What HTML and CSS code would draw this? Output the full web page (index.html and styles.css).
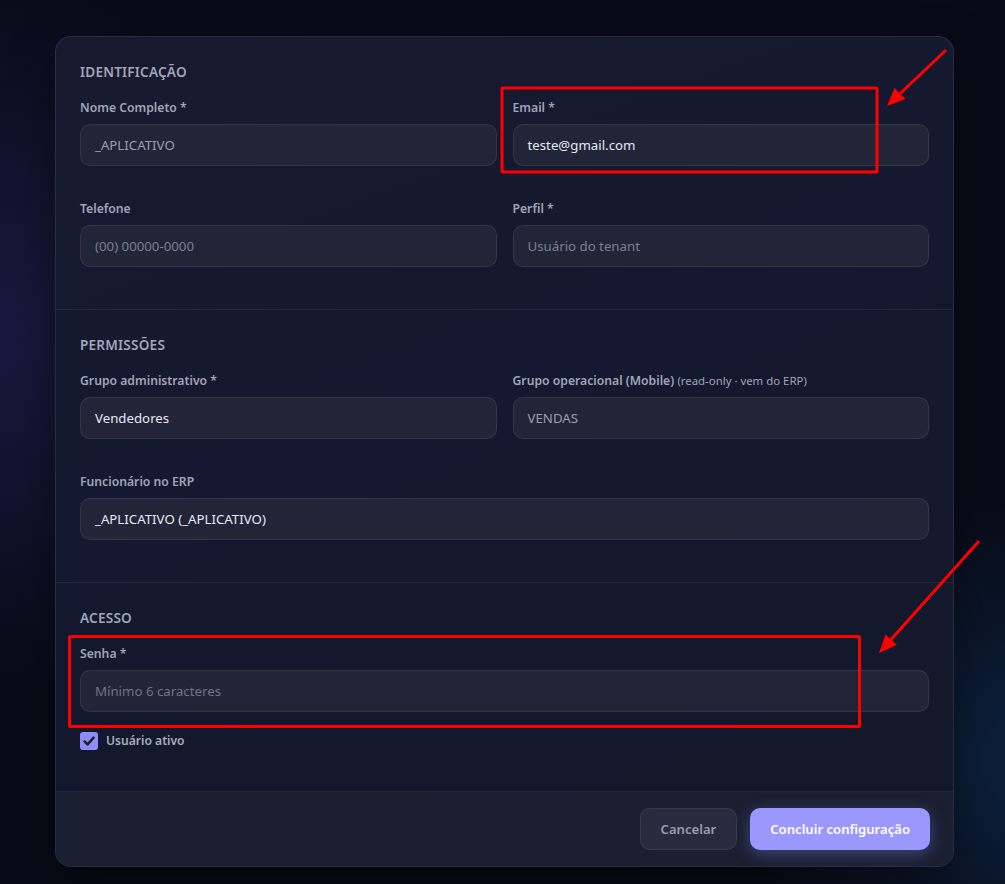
FILE: index.html
```html
<!DOCTYPE html>
<html lang="pt-BR">

<head>
    <meta charset="UTF-8">
    <meta name="viewport" content="width=device-width, initial-scale=1.0">
    <title>Configurar usuário</title>
    <link rel="stylesheet" href="styles.css">
</head>

<body>
    <form class="user-card">
        <!-- identificação -->
        <section class="user-card__section">
            <h3 class="user-card__title">Identificação</h3>
            <div class="user-card__grid">
                <div class="field">
                    <label class="field__label">Nome Completo *</label>
                    <div class="field__input field__input--muted">_APLICATIVO</div>
                </div>
                <div class="field">
                    <label class="field__label">Email *</label>
                    <div class="field__input">teste@gmail.com</div>
                </div>
                <div class="field">
                    <label class="field__label">Telefone</label>
                    <div class="field__input field__input--placeholder">(00) 00000-0000</div>
                </div>
                <div class="field">
                    <label class="field__label">Perfil *</label>
                    <div class="field__input field__input--placeholder">Usuário do tenant</div>
                </div>
            </div>
        </section>

        <!-- permissões -->
        <section class="user-card__section">
            <h3 class="user-card__title">Permissões</h3>
            <div class="user-card__grid">
                <div class="field">
                    <label class="field__label">Grupo administrativo *</label>
                    <div class="field__input">Vendedores</div>
                </div>
                <div class="field">
                    <label class="field__label">Grupo operacional (Mobile) <small class="field__hint">(read-only · vem do ERP)</small></label>
                    <div class="field__input field__input--muted">VENDAS</div>
                </div>
                <div class="field field--wide">
                    <label class="field__label">Funcionário no ERP</label>
                    <div class="field__input">_APLICATIVO (_APLICATIVO)</div>
                </div>
            </div>
        </section>

        <!-- acesso -->
        <section class="user-card__section">
            <h3 class="user-card__title">Acesso</h3>
            <div class="field">
                <label class="field__label">Senha *</label>
                <div class="field__input field__input--placeholder field__input--dim">Mínimo 6 caracteres</div>
            </div>
            <label class="check">
                <input class="check__input" type="checkbox" checked />
                <span class="check__box">
                    <svg width="14" height="14" viewBox="0 0 14 14">
                        <path d="M2.5 7.4 L5.6 10.4 L11.6 3.6" fill="none" stroke="#1b1c30" stroke-width="2.4" stroke-linecap="round" stroke-linejoin="round" />
                    </svg>
                </span>
                <span class="check__text">Usuário ativo</span>
            </label>
        </section>

        <div class="user-card__footer">
            <button class="btn btn--ghost" type="button">Cancelar</button>
            <button class="btn btn--primary" type="submit">Concluir configuração</button>
        </div>
    </form>

    <!-- marcações vermelhas por cima da tela -->
    <svg class="marks" width="1005" height="884" viewBox="0 0 1005 884">
        <g fill="none" stroke="#ff0000" stroke-width="3">
            <rect x="502" y="88" width="375" height="84" rx="1" />
            <rect x="69.5" y="636.5" width="790" height="90" rx="1" />
            <line x1="946" y1="50" x2="896" y2="97.5" />
            <line x1="979" y1="541" x2="887" y2="644" />
        </g>
        <g fill="#ff0000">
            <polygon points="887,106 905.5,99 894.5,88" />
            <polygon points="879,653 896.8,644.8 885.5,634.6" />
        </g>
    </svg>
</body>

</html>
```

FILE: styles.css
```css
/* page */
body {
    margin: 0;
    min-height: 884px;
    position: relative;
    font-family: "Noto Sans", "Open Sans", sans-serif;
    background:
        radial-gradient(ellipse 420px 520px at 0 330px, rgba(40, 36, 100, 0.55), transparent 70%),
        radial-gradient(ellipse 380px 380px at 1005px 760px, rgba(14, 42, 78, 0.7), transparent 70%),
        #080b16;
    overflow: hidden;
}

/* card */
.user-card {
    width: 897px;
    margin: 36px 0 0 55px;
    border: 1px solid rgba(255, 255, 255, 0.09);
    border-radius: 16px;
    overflow: hidden;
    background: linear-gradient(160deg, #171a2f 0%, #141830 45%, #131829 100%);
    box-shadow: 0 20px 50px rgba(0, 0, 0, 0.4);
}

.user-card__section {
    padding: 24px;
    border-bottom: 1px solid rgba(255, 255, 255, 0.07);
}

.user-card__title {
    margin: 0 0 16px;
    font-size: 13.6px;
    line-height: 22px;
    font-weight: 600;
    letter-spacing: 0.2px;
    text-transform: uppercase;
    color: #a1a5b8;
}

.user-card__grid {
    display: grid;
    grid-template-columns: 1fr 1fr;
    column-gap: 16px;
    row-gap: 16px;
}

.user-card__footer {
    display: flex;
    justify-content: flex-end;
    gap: 13px;
    padding: 16px 23px 16px 24px;
    background: #1a1f31;
}

/* field */
.field {
    padding-bottom: 18px;
}

.field--wide {
    grid-column: 1 / -1;
}

.field__label {
    display: block;
    height: 18px;
    margin-bottom: 7px;
    font-size: 12.2px;
    line-height: 18px;
    font-weight: 600;
    color: #a0a4b6;
    white-space: nowrap;
}

.field__hint {
    font-size: 11.4px;
    line-height: 1;
    font-weight: 400;
}

.field__input {
    height: 42px;
    box-sizing: border-box;
    display: flex;
    align-items: center;
    padding: 0 14px;
    border: 1px solid rgba(255, 255, 255, 0.08);
    border-radius: 10px;
    background: #222538;
    font-size: 13.25px;
    color: #e6e8f0;
}

.field__input--muted {
    color: #9a9eae;
}

.field__input--placeholder {
    color: #7b7f90;
}

.field__input--dim {
    color: #6f7384;
}

/* checkbox */
.check {
    display: flex;
    align-items: center;
    gap: 8px;
    height: 21px;
    margin-bottom: 16px;
    font-size: 12.1px;
    font-weight: 600;
    color: #a9adbf;
}

.check__input {
    display: none;
}

.check__box {
    width: 18px;
    height: 18px;
    display: flex;
    align-items: center;
    justify-content: center;
    border-radius: 3px;
    background: #8f8cf6;
}

/* buttons */
.btn {
    height: 42px;
    padding: 0 20px;
    border-radius: 10px;
    font-family: inherit;
    font-size: 13.1px;
    font-weight: 600;
    cursor: pointer;
}

.btn--ghost {
    border: 1px solid rgba(255, 255, 255, 0.08);
    background: #262b3e;
    color: #9a9eae;
}

.btn--primary {
    border: none;
    background: #9b98fd;
    color: #ffffff;
    box-shadow: 0 4px 16px rgba(140, 136, 255, 0.35);
}

/* annotations */
.marks {
    position: absolute;
    top: 0;
    left: 0;
    pointer-events: none;
}
```
